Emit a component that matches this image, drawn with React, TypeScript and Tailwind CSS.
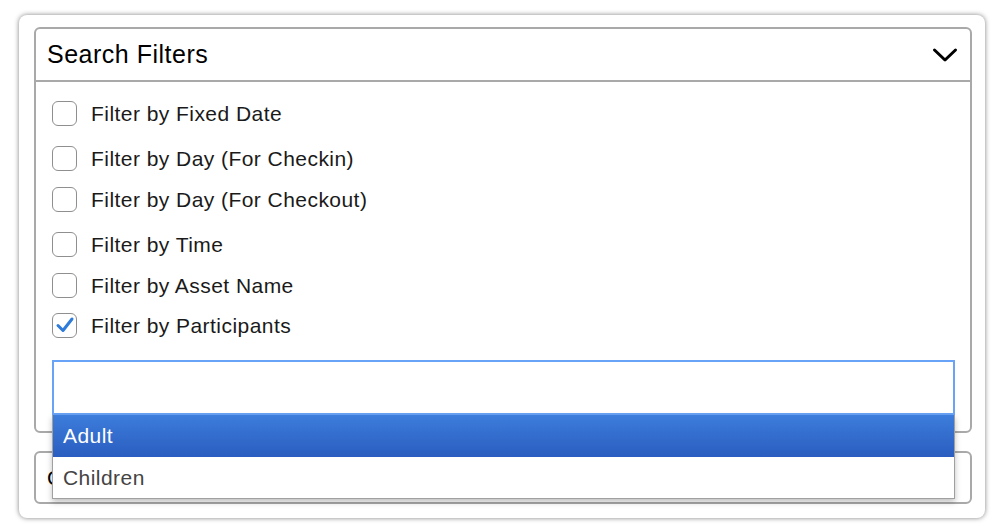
import React from "react";

const rows: { label: string; checked?: boolean; mt: string }[] = [
  { label: "Filter by Fixed Date", mt: "mt-[11px]" },
  { label: "Filter by Day (For Checkin)", mt: "mt-[5px]" },
  { label: "Filter by Day (For Checkout)", mt: "mt-[1px]" },
  { label: "Filter by Time", mt: "mt-[5px]" },
  { label: "Filter by Asset Name", mt: "mt-[1px]" },
  { label: "Filter by Participants", checked: true, mt: "mt-0" },
];

function Box({ checked }: { checked?: boolean }) {
  return (
    <div className="w-[25px] h-[25px] rounded-[6px] border-[1.5px] border-[#8f8f8f] bg-white flex items-center justify-center shrink-0">
      {checked && (
        <svg width="20" height="18" viewBox="0 0 20 18">
          <path d="M3 9.5 L8 14.5 L17 3" fill="none" stroke="#2f7bd9" strokeWidth="3" strokeLinecap="round" strokeLinejoin="round" />
        </svg>
      )}
    </div>
  );
}

export default function App() {
  return (
    <div className="w-[1000px] h-[532px] bg-white overflow-hidden pt-[15px] pl-[19px]" style={{ fontFamily: '"Liberation Sans", Arial, sans-serif' }}>
      <div className="w-[966px] h-[503px] rounded-[8px] bg-white shadow-[0_0_5px_rgba(0,0,0,0.5)] pt-[12px] px-[15px] relative">
        <div className="w-[938px] rounded-[6px] border-2 border-[#a9a9a9] bg-white">
          <div className="h-[53px] flex items-center justify-between pl-[11px] pr-[12px] border-b-2 border-[#a9a9a9]">
            <span className="text-[25px] tracking-[0.5px] text-black leading-none">Search Filters</span>
            <svg width="26" height="16" viewBox="0 0 26 16">
              <path d="M2.5 3 L13 13 L23.5 3" fill="none" stroke="#000" strokeWidth="3" strokeLinecap="round" strokeLinejoin="round" />
            </svg>
          </div>
          <div className="px-[16px] pb-[16px] relative">
            {rows.map((r) => (
              <div key={r.label} className={`h-[40px] flex items-center gap-[14px] ${r.mt}`}>
                <Box checked={r.checked} />
                <span className="text-[21px] tracking-[0.45px] text-[#1a1a1a] leading-none">{r.label}</span>
              </div>
            ))}
            <div className="relative mt-[15px]">
              <div className="h-[55px] w-[903px] border-2 border-[#69a3f7] bg-white" />
              <div className="absolute left-0 top-[55px] w-[903px] z-10 bg-white border border-[#a0a0a0] border-t-0 shadow-[0_3px_6px_rgba(0,0,0,0.25)]">
                <div className="h-[42px] flex items-center pl-[10px] text-white text-[21px] tracking-[0.45px] bg-gradient-to-b from-[#3d7ddb] to-[#2a5dbf]">Adult</div>
                <div className="h-[41px] flex items-center pl-[10px] text-[#444] text-[21px] tracking-[0.45px] bg-white">Children</div>
              </div>
            </div>
          </div>
        </div>
        <div className="w-[938px] h-[53px] mt-[18px] rounded-[6px] border-2 border-[#a9a9a9] bg-white flex items-center pl-[11px]">
          <span className="text-[21px] text-black">Columns</span>
        </div>
      </div>
    </div>
  );
}
